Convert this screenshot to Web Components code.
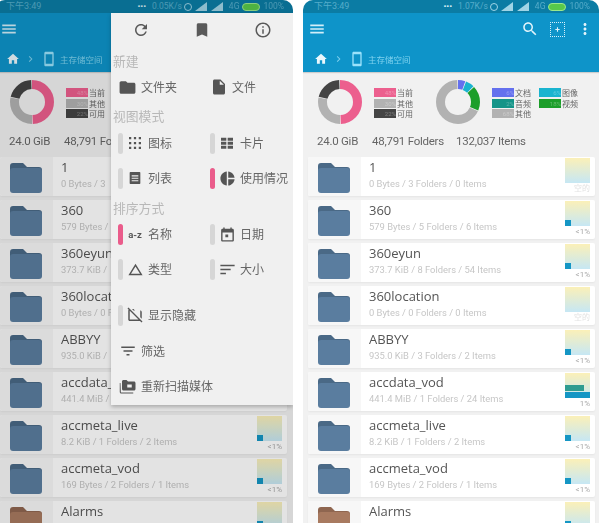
<!DOCTYPE html>
<html lang="zh"><head><meta charset="utf-8"><title>Files</title>
<style>
html,body{margin:0;padding:0;background:#fff;overflow:hidden}
body{width:600px;height:523px;font-family:Roboto,"Noto Sans CJK SC",sans-serif}
.stage{display:flex;gap:10px;height:523px;overflow:hidden;margin-left:-5px;width:605px}
</style></head><body>
<div class="stage">
<app-screen dim style="width:298px;--row-end:6px">
  <status-bar time="下午3:49" speed="0.05K/s"></status-bar>
  <tool-bar></tool-bar>
  <usage-stats covered></usage-stats>
  <file-list covered></file-list>
  <popup-menu></popup-menu>
</app-screen>
<app-screen style="width:296px;--row-end:4px">
  <status-bar time="下午3:49" speed="1.07K/s"></status-bar>
  <tool-bar actions></tool-bar>
  <usage-stats></usage-stats>
  <file-list></file-list>
</app-screen>
</div>
<script>
const P={
 menu:'M3 18h18v-2.2H3zM3 13.1h18v-2.2H3zM3 6v2.2h18V6z',
 home:'M10 20v-6h4v6h5v-8h3L12 3 2 12h3v8z',
 refresh:'M17.65 6.35C16.2 4.9 14.21 4 12 4c-4.42 0-7.99 3.58-7.99 8s3.57 8 7.99 8c3.73 0 6.84-2.55 7.73-6h-2.08c-.82 2.33-3.04 4-5.65 4-3.31 0-6-2.69-6-6s2.69-6 6-6c1.66 0 3.14.69 4.22 1.78L13 11h7V4l-2.35 2.35z',
 bookmark:'M17 3H7c-1.1 0-2 .9-2 2v16l7-3 7 3V5c0-1.1-.9-2-2-2z',
 info:'M11 7h2v2h-2zm0 4h2v6h-2zm1-9C6.48 2 2 6.48 2 12s4.48 10 10 10 10-4.48 10-10S17.52 2 12 2zm0 18c-4.41 0-8-3.59-8-8s3.59-8 8-8 8 3.59 8 8-3.59 8-8 8z',
 folder:'M10 4H4c-1.1 0-2 .9-2 2v12c0 1.1.9 2 2 2h16c1.1 0 2-.9 2-2V8c0-1.1-.9-2-2-2h-8z',
 file:'M6 2c-1.1 0-2 .9-2 2v16c0 1.1.9 2 2 2h12c1.1 0 2-.9 2-2V8l-6-6zm7 7V3.5L18.5 9z',
 dots:'M4 4h3v3H4zM10.5 4h3v3h-3zM17 4h3v3h-3zM4 10.5h3v3H4zM10.5 10.5h3v3h-3zM17 10.5h3v3h-3zM4 17h3v3H4zM10.5 17h3v3h-3zM17 17h3v3h-3z',
 cards:'M3 4h8v4.5H3zM13 4h8v4.5h-8zM3 10h8v4.5H3zM13 10h8v4.5h-8zM3 16h8v4.5H3zM13 16h8v4.5h-8z',
 list:'M5 3h14c.6 0 1 .4 1 1v16c0 .6-.4 1-1 1H5c-.6 0-1-.4-1-1V4c0-.6.4-1 1-1zm2 5v1.6h10V8zm0 3.6v1.6h10v-1.6zm0 3.6v1.6h10v-1.6z',
 pie:'M11 2v20c-5.07-.5-9-4.79-9-10s3.93-9.5 9-10zm2.03 0v8.99H22c-.47-4.74-4.24-8.52-8.97-8.99zm0 11.01V22c4.74-.47 8.5-4.25 8.97-8.99z',
 cal:'M19 4h-1V2h-2v2H8V2H6v2H5c-1.1 0-2 .9-2 2v14c0 1.1.9 2 2 2h14c1.1 0 2-.9 2-2V6c0-1.1-.9-2-2-2zm0 16H5V9h14zM9 12h4v4H9z',
 tri:'M12 7.77 18.39 18H5.61L12 7.77M12 4 2 20h20z',
 sort:'M3 6h18v2H3zM3 11h13v2H3zM3 16h7v2H3z',
 hide:'M3.3 2 2 3.3l1.6 1.6C3.2 5.2 3 5.6 3 6v12c0 1.1.9 2 2 2h13.7l2 2 1.3-1.3zM5 18V6.3L16.7 18zM10 4H8l2 2h9v9l2 2V8c0-1.1-.9-2-2-2h-7z',
 filter:'M10 18h4v-2h-4zM3 6v2h18V6zm3 7h12v-2H6z',
 scan:'M20 6h-8l-2-2H6c-1.1 0-2 .9-2 2v10c0 1.1.9 2 2 2h14c1.1 0 2-.9 2-2V8c0-1.1-.9-2-2-2zm-9 4h6v4h-6zM2 8H1v12c0 1.1.9 2 2 2h16v-1.5H2.5z',
 search:'M15.5 14h-.79l-.28-.27C15.41 12.59 16 11.11 16 9.5 16 5.91 13.09 3 9.5 3S3 5.91 3 9.5 5.91 16 9.5 16c1.61 0 3.09-.59 4.23-1.57l.27.28v.79l5 4.99L20.49 19zm-6 0C7.01 14 5 11.99 5 9.5S7.01 5 9.5 5 14 7.01 14 9.5 11.99 14 9.5 14z',
 more:'M12 8c1.1 0 2-.9 2-2s-.9-2-2-2-2 .9-2 2 .9 2 2 2zm0 2c-1.1 0-2 .9-2 2s.9 2 2 2 2-.9 2-2-.9-2-2-2zm0 6c-1.1 0-2 .9-2 2s.9 2 2 2 2-.9 2-2-.9-2-2-2z',
 chev:'M9 6 7.6 7.4 12.2 12l-4.6 4.6L9 18l6-6z',
 phone:'M17 1H7C5.9 1 5 1.9 5 3v18c0 1.1.9 2 2 2h10c1.1 0 2-.9 2-2V3c0-1.1-.9-2-2-2zm0 18H7V5h10z',
 add:'M11 8h2v3h3v2h-3v3h-2v-3H8v-2h3z'
};
const svg=(k,s,c='currentColor')=>`<svg width="${s}" height="${s}" viewBox="0 0 24 24" fill="${c}" style="display:block;flex:none"><path d="${P[k]}"/></svg>`;
class Base extends HTMLElement{
 render(h){if(!this.shadowRoot)this.attachShadow({mode:'open'});this.shadowRoot.innerHTML=h}
 a(n,d=''){return this.getAttribute(n)??d}
}
customElements.define('app-screen',class extends Base{connectedCallback(){this.render(`<style>
:host{display:flex;flex-direction:column;position:relative;flex:none;height:523px;overflow:hidden;border-radius:10px 10px 0 0;background:#f1f1f1;filter:blur(.6px)}
.dim{position:absolute;inset:0;background:rgba(0,0,0,.11);z-index:1}
::slotted(popup-menu){z-index:2}
</style><slot></slot>${this.hasAttribute('dim')?'<div class="dim"></div>':''}`)}});

customElements.define('status-bar',class extends Base{connectedCallback(){
 const sig='<svg width="12" height="9" viewBox="0 0 12 9" fill="#9fd4e6"><path d="M0 9 12 0v9z"/></svg>';
 this.render(`<style>
:host{display:flex;align-items:center;height:13px;background:#0b7ca4;color:#56acca;font:9px/13px Roboto,"Noto Sans CJK SC",sans-serif;padding:0 9px 0 11px;flex:none;white-space:nowrap}
.r{margin-left:auto;display:flex;align-items:center;gap:4px;font-size:8.5px}
.alarm{width:6px;height:6px;border:1.3px solid #9fd4e6;border-radius:50%;margin:0 -1px 0 -2px}
.bat{width:16px;height:6px;border-radius:4px;background:#58c94a;border:1px solid #9be88c;margin:0 -1px}
.d{color:#d8eef6;font-weight:700;font-size:8px;margin-right:2px}
.g{margin-left:2px}
</style><span>${this.a('time')}</span><span class="r"><span class="d">•••</span><span>${this.a('speed')}</span><span class="alarm"></span>${sig}${sig}<span class="g">4G</span><span class="bat"></span><span>100%</span></span>`)}});

customElements.define('tool-bar',class extends Base{connectedCallback(){
 const acts=this.hasAttribute('actions');
 this.render(`<style>
:host{display:block;background:#0e94c9;height:59px;flex:none;box-shadow:0 1px 1px rgba(0,0,0,.15);position:relative}
.top{display:flex;align-items:center;height:32px;padding:0 5px}
.sp{flex:1}
.acts{display:flex;align-items:center;gap:11px}
.path{display:flex;align-items:center;height:27px;padding:0 0 0 11px}
.c{margin:0 0 0 5px}
.p{margin-left:4px}
.path span{font:8.5px "Noto Sans CJK SC",sans-serif;color:#7fd2ef;margin-left:3px;white-space:nowrap}
.box{width:13px;height:13px;border:1px dotted #d6f0fa;display:flex;align-items:center;justify-content:center}
</style><div class="top">${svg('menu',18,'#d2eef9')}<div class="sp"></div>${acts?`<div class="acts">${svg('search',18,'#e2f4fb')}<div class="box">${svg('add',13,'#e2f4fb')}</div>${svg('more',18,'#e2f4fb')}</div>`:''}</div>
<div class="path">${svg('home',14,'#eaf7fc')}<div class="c">${svg('chev',12,'#7fd0ee')}</div><div class="p">${svg('phone',16,'#9be2fb')}</div><span>主存储空间</span></div>`)}});

customElements.define('donut-chart',class extends Base{connectedCallback(){
 const segs=JSON.parse(this.a('segs'));let off=0,c='';
 for(const [v,col] of segs){c+=`<circle cx="22" cy="22" r="17.5" fill="none" stroke="${col}" stroke-width="9" pathLength="100" stroke-dasharray="${v-.6} ${100-v+.6}" stroke-dashoffset="${-off}" transform="rotate(-90 22 22)"/>`;off+=v}
 this.render(`<style>:host{display:block;width:44px;height:44px;flex:none}svg{display:block}</style><svg width="44" height="44" viewBox="0 0 44 44">${c}</svg>`)}});

customElements.define('legend-col',class extends Base{connectedCallback(){
 const it=JSON.parse(this.a('items'));
 this.render(`<style>
:host{display:flex;flex-direction:column;gap:1.5px;flex:none}
.i{display:flex;align-items:center;height:9px;gap:1px}
.s{width:22px;height:9px;font:6px/9px Roboto,sans-serif;color:rgba(255,255,255,.3);text-align:right}
.l{font:8px/9px "Noto Sans CJK SC",sans-serif;color:#666;white-space:nowrap;width:17px}
</style>${it.map(([t,c,p])=>`<div class="i"><div class="s" style="background:${c}">${p}</div><span class="l">${t}</span></div>`).join('')}`)}});

customElements.define('usage-stats',class extends Base{connectedCallback(){
 const cov=this.hasAttribute('covered');
 this.render(`<style>
:host{display:block;flex:none;height:85px}
.c{display:flex;align-items:flex-start;padding:8px 0 0 15px;height:44px}
legend-col{margin-top:8px}
.a{margin-left:12px}.b{margin-left:22px}.d{margin-left:12px}.e{margin-left:7px}
.n{display:flex;padding:10px 0 0 14px;font:11.5px/15px Roboto,sans-serif;letter-spacing:-.25px;color:#666;white-space:nowrap}
.n span:nth-child(1){width:55px}.n span:nth-child(2){width:84px}
</style><div class="c">
<donut-chart segs='[[50,"#ec5f8e"],[29,"#b2b2b2"],[21,"#444"]]'></donut-chart>
<legend-col class="a" items='[["当前","#ec5f8e","48%"],["其他","#b2b2b2","30%"],["可用","#444","22%"]]'></legend-col>
${cov?'':`<donut-chart class="b" segs='[[6,"#6470ee"],[7,"#1ab4cf"],[19,"#1c9e2a"],[68,"#b2b2b2"]]'></donut-chart>
<legend-col class="d" items='[["文档","#6470ee","6%"],["音频","#149488","2%"],["其他","#b2b2b2","68%"]]'></legend-col>
<legend-col class="e" items='[["图像","#1ab4cf","6%"],["视频","#1c9e2a","18%"]]'></legend-col>`}
</div><div class="n"><span>24.0 GiB</span><span>${cov?'48,791 Fo':'48,791 Folders'}</span>${cov?'':'<span>132,037 Items</span>'}</div>`)}});

customElements.define('file-row',class extends Base{connectedCallback(){
 const u=this.a('usage'),m=this.a('mark'),brown=this.hasAttribute('brown'),cov=this.hasAttribute('covered');
 const col=brown?'#a87a60':'#5a7d9f',tab=brown?'#8f6650':'#4a6986';
 const mark=m==='small'?'<i class="m"></i>':m==='big'?'<i class="g1"></i><i class="g2"></i>':'';
 this.render(`<style>
:host{display:flex;height:39px;flex:none;margin:0 var(--row-end,4px) 0 5px;background:#fff;border-radius:2px;box-shadow:0 1px 2px rgba(0,0,0,.05);overflow:hidden}
.ic{width:53px;flex:none;background:#f7f7f7;display:flex;align-items:center;padding:3px 0 0 10px;box-sizing:border-box}
.ic svg{display:block}
.tx{flex:1;min-width:0;padding-left:8px;white-space:nowrap}
.nm{font:13px/17px "Open Sans",Roboto,sans-serif;color:#555;margin-top:2px}
.sb{font:9.4px/14px Roboto,sans-serif;color:#c6c6c6;margin-top:1px}
.th{width:25px;flex:none;margin:1px 5px 0 0}
.g{height:25px;background:linear-gradient(#fbf0b8,#c6e7f4);position:relative}
.m{position:absolute;left:0;bottom:0;width:6px;height:6px;background:#1596c4}
.g1{position:absolute;left:0;bottom:7px;width:19px;height:6px;background:#2f9c90}
.g2{position:absolute;left:0;right:0;bottom:0;height:6px;background:#1596c4}
.u{font:8px/12px Roboto,"Noto Sans CJK SC",sans-serif;color:#aaa;text-align:right}
.u.e{color:#e2e2e2}
</style><div class="ic"><svg width="32" height="30" viewBox="0 0 32 30"><path d="M3 0h10l4 4h12a3 3 0 0 1 3 3v3H0V3a3 3 0 0 1 3-3z" fill="${tab}"/><rect y="5" width="32" height="25" rx="3" fill="${col}"/></svg></div>
<div class="tx"><div class="nm">${this.a('name')}</div>${this.a('sub')?`<div class="sb">${this.a('sub')}</div>`:''}</div>
<div class="th">${cov?'':`<div class="g">${mark}</div>${u?`<div class="u ${m?'':'e'}">${u.replace('<','&lt;')}</div>`:''}`}</div>`)}});

customElements.define('file-list',class extends Base{connectedCallback(){
 const cov=this.hasAttribute('covered');
 const rows=[['1','0 Bytes / 3 Folders / 0 Items','空的','','0 Bytes / 3'],['360','579 Bytes / 5 Folders / 6 Items','<1%','small','579 Bytes /'],['360eyun','373.7 KiB / 8 Folders / 54 Items','<1%','small','373.7 KiB /'],['360location','0 Bytes / 0 Folders / 0 Items','空的','','0 Bytes / 0 F','360locat'],['ABBYY','935.0 KiB / 3 Folders / 2 Items','<1%','small','935.0 KiB /'],['accdata_vod','441.4 MiB / 1 Folders / 24 Items','1%','big','441.4 MiB /','accdata_'],['accmeta_live','8.2 KiB / 1 Folders / 2 Items','<1%','small'],['accmeta_vod','169 Bytes / 2 Folders / 1 Items','<1%','small'],['Alarms','','','small']];
 this.render(`<style>:host{display:flex;flex-direction:column;gap:4px}</style>`+rows.map((r,i)=>{const c=cov&&i<6;return `<file-row name="${c&&r[5]?r[5]:r[0]}" sub="${c?r[4]:r[1]}" usage="${r[2].replace('<','&lt;')}" mark="${r[3]}" ${i==8?'brown':''} ${c?'covered':''}></file-row>`}).join(''))}});

customElements.define('menu-item',class extends Base{connectedCallback(){
 const p=this.a('pill');
 this.render(`<style>
:host{display:flex;align-items:center;height:30px;color:#4d4d4d}
.pl{width:5px;height:21px;border-radius:3px;background:#d6d6d6;margin-right:5px;flex:none}
.pl.on{background:#ea5c8b}
.ib{width:14px;display:flex;justify-content:center;flex:none}
.t{font:12px/16px "Noto Sans CJK SC",sans-serif;color:#666;margin-left:6px;white-space:nowrap}
:host([plain]){padding-left:2px}
:host([plain]) .ib{width:15px}
.az{font:700 9.5px Roboto,sans-serif;color:#555;white-space:nowrap}
</style>${this.hasAttribute('plain')?'':`<span class="pl ${p==='on'?'on':''}"></span>`}<span class="ib">${this.a('icon')==='az'?'<span class="az">a-z</span>':svg(this.a('icon'),+this.a('size',16),'#555')}</span><span class="t">${this.a('text')}</span>`)}});

customElements.define('popup-menu',class extends Base{connectedCallback(){
 this.render(`<style>
:host{position:absolute;left:116px;top:13px;width:182px;height:392px;background:#f0f0f0;box-shadow:0 2px 4px rgba(0,0,0,.25);display:flex;flex-direction:column;box-sizing:border-box;color:#555}
.top{display:flex;justify-content:space-around;align-items:center;height:34px;flex:none}
h4{margin:4px 0 0 2px;font:400 12.8px/20px "Noto Sans CJK SC",sans-serif;color:#b8b8b8;height:20px}
h4.h3{margin-top:5px}
.g{display:grid;grid-template-columns:92px 1fr;padding-left:7px}
.g1{margin-top:1px;height:30px;grid-template-columns:91px 1fr}
.g2{row-gap:5px;margin-top:2px}
.g3{row-gap:5px;margin-top:1px}
.s{padding-left:7px}
.x1{margin-top:16px}.x2{margin-top:6px}.x3{margin-top:5px}
</style>
<div class="top">${svg('refresh',18,'#5a5a5a')}${svg('bookmark',18,'#5a5a5a')}${svg('info',18,'#5a5a5a')}</div>
<h4>新建</h4>
<div class="g g1"><menu-item plain icon="folder" size="19" text="文件夹"></menu-item><menu-item plain icon="file" size="18" text="文件"></menu-item></div>
<h4>视图模式</h4>
<div class="g g2"><menu-item icon="dots" size="18" text="图标"></menu-item><menu-item icon="cards" text="卡片"></menu-item><menu-item icon="list" size="16" text="列表"></menu-item><menu-item pill="on" icon="pie" size="17" text="使用情况"></menu-item></div>
<h4 class="h3">排序方式</h4>
<div class="g g3"><menu-item pill="on" icon="az" text="名称"></menu-item><menu-item icon="cal" size="17" text="日期"></menu-item><menu-item icon="tri" size="17" text="类型"></menu-item><menu-item icon="sort" size="19" text="大小"></menu-item></div>
<div class="s x1"><menu-item icon="hide" size="18" text="显示隐藏"></menu-item></div>
<div class="s x2"><menu-item plain icon="filter" size="18" text="筛选"></menu-item></div>
<div class="s x3"><menu-item plain icon="scan" size="18" text="重新扫描媒体"></menu-item></div>`)}});
</script>
</body></html>
